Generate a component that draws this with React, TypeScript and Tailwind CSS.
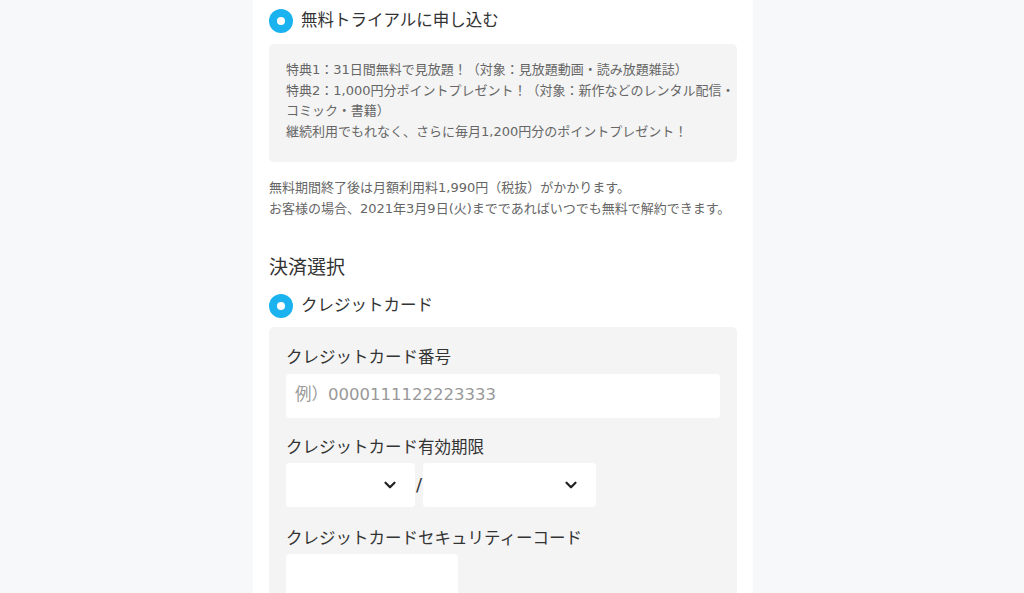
import { ChevronDown } from 'lucide-react'

const font = { fontFamily: '"DejaVu Sans", "Noto Sans CJK JP", "Noto Sans", sans-serif' }

function Radio({ label }: { label: string }) {
  return (
    <div className="flex items-center gap-2 h-6">
      <span className="w-6 h-6 rounded-full bg-[#1bb3ef] flex items-center justify-center shrink-0">
        <span className="w-2 h-2 rounded-full bg-white" />
      </span>
      <span className="text-[16.5px] text-[#333] leading-6">{label}</span>
    </div>
  )
}

function Select({ width }: { width: string }) {
  return (
    <div className={`${width} h-11 bg-white rounded-[4px] flex items-center justify-end pr-4`}>
      <ChevronDown className="w-[18px] h-[18px] text-[#222]" strokeWidth={3} />
    </div>
  )
}

export default function App() {
  return (
    <div className="h-[593px] overflow-hidden bg-[#f7f8fa] flex justify-center pr-[18px]" style={font}>
      <div className="w-[500px] bg-white px-4 pt-[9px] pb-10">
        <Radio label="無料トライアルに申し込む" />

        <div className="mt-[11px] bg-[#f4f4f4] rounded-[5px] px-[17px] pt-[16px] pb-[19px] text-[13px] leading-[20.7px] text-[#666] whitespace-nowrap">
          <p>特典1：31日間無料で見放題！（対象：見放題動画・読み放題雑誌）</p>
          <p>特典2：1,000円分ポイントプレゼント！（対象：新作などのレンタル配信・</p>
          <p>コミック・書籍）</p>
          <p>継続利用でもれなく、さらに毎月1,200円分のポイントプレゼント！</p>
        </div>

        <div className="mt-[15px] text-[13px] leading-[21px] text-[#666] whitespace-nowrap">
          <p>無料期間終了後は月額利用料1,990円（税抜）がかかります。</p>
          <p>お客様の場合、2021年3月9日(火)までであればいつでも無料で解約できます。</p>
        </div>

        <h2 className="mt-[34px] text-[19px] leading-7 text-[#333]">決済選択</h2>

        <div className="mt-[13px]">
          <Radio label="クレジットカード" />
        </div>

        <div className="mt-[9px] bg-[#f4f4f4] rounded-[5px] px-[17px] pt-[19px] pb-6">
          <label className="block text-[16.5px] leading-6 text-[#333]">クレジットカード番号</label>
          <div className="mt-[4px] h-11 bg-white rounded-[4px] flex items-center px-[9px] text-[16.5px] text-[#999]">
            例）0000111122223333
          </div>

          <label className="block mt-[18px] text-[16.5px] leading-6 text-[#333]">クレジットカード有効期限</label>
          <div className="mt-[3px] flex items-center">
            <Select width="w-[129px]" />
            <span className="w-2 text-center text-[18px] text-[#333]">/</span>
            <Select width="w-[173px]" />
          </div>

          <label className="block mt-[20px] text-[16.5px] leading-6 text-[#333]">クレジットカードセキュリティーコード</label>
          <div className="mt-[3px] w-[172px] h-11 bg-white rounded-[4px]" />
        </div>
      </div>
    </div>
  )
}
